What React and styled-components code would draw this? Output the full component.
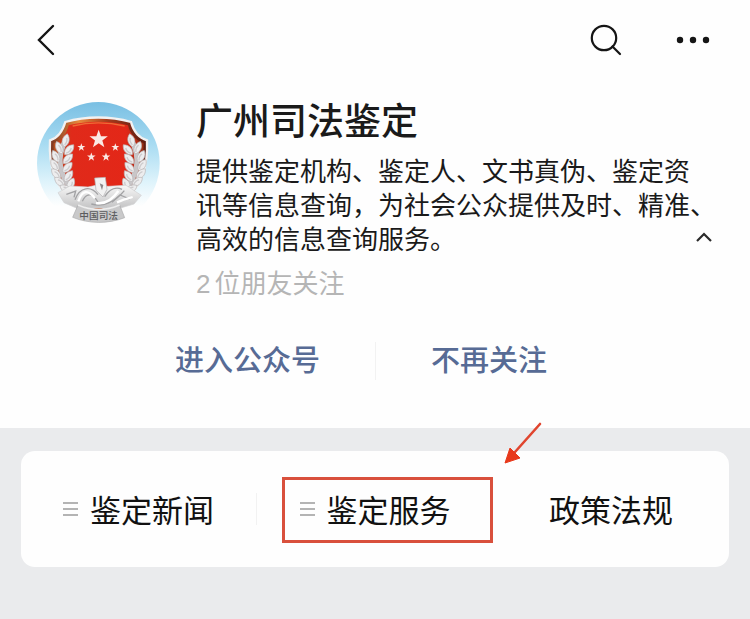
import { useState } from "react"
import styled, { createGlobalStyle } from "styled-components"

const menus = [
    { name: "鉴定新闻", hasSub: true },
    { name: "鉴定服务", hasSub: true, marked: true },
    { name: "政策法规", hasSub: false },
]

const STAR = "M0 -10 L2.4 -3.2 L9.5 -3.1 L3.8 1.2 L5.9 8.1 L0 4 L-5.9 8.1 L-3.8 1.2 L-9.5 -3.1 L-2.4 -3.2 Z"

// x, y, rotation of every leaf on the left branch, the right one is mirrored
const leaves = [
    [137, 152, 14], [118, 174, -24], [147, 180, 42],
    [108, 200, -28], [143, 207, 44], [105, 226, -34],
    [142, 233, 42], [109, 252, -42], [145, 259, 36],
    [120, 276, -50], [152, 283, 26], [138, 297, -60],
]

function Branch() {
    return <g>
        <path d="M137 150 C112 195 112 250 160 305" fill="none" stroke="#c9c6c8" strokeWidth="16" />
        {leaves.map(([x, y, r]) => (
            <g key={y} transform={`translate(${x} ${y}) rotate(${r})`}>
                <path d="M0 -21 C14 -9 13 10 0 19 C-13 10 -14 -9 0 -21 Z" fill="#ededee" stroke="#bab7b9" strokeWidth="2" />
                <path d="M1 -9 C5 -2 4 6 0 13" fill="none" stroke="#cdcbcd" strokeWidth="4" />
            </g>
        ))}
    </g>
}

function Emblem() {
    return <EmblemSvg viewBox="51 36 369 369" role="img" aria-label="中国司法">
        <defs>
            <linearGradient id="sky" x1="0" y1="0" x2="0" y2="1">
                <stop offset="0" stopColor="#79bfe3" />
                <stop offset="0.35" stopColor="#a9dcf2" />
                <stop offset="0.65" stopColor="#def3fb" />
                <stop offset="0.85" stopColor="#fefefe" />
            </linearGradient>
            <linearGradient id="shield" x1="0" y1="0" x2="1" y2="0">
                <stop offset="0" stopColor="#b5501f" />
                <stop offset="0.2" stopColor="#e02a1a" />
                <stop offset="0.8" stopColor="#e32718" />
                <stop offset="1" stopColor="#963015" />
            </linearGradient>
            <linearGradient id="rim" x1="0" y1="0" x2="1" y2="0">
                <stop offset="0" stopColor="#7a3420" />
                <stop offset="0.3" stopColor="#e8893c" />
                <stop offset="0.6" stopColor="#a53a1c" />
                <stop offset="1" stopColor="#5c1a10" />
            </linearGradient>
            <linearGradient id="silver" x1="0" y1="0" x2="0" y2="1">
                <stop offset="0" stopColor="#f8f8f8" />
                <stop offset="1" stopColor="#c4c4c5" />
            </linearGradient>
        </defs>
        <circle cx="235" cy="220" r="184" fill="url(#sky)" />
        <path d="M90 151 C117 143 129 120 136 96 C197 78 272 78 333 96 C340 122 354 143 381 151 C384 220 369 285 315 330 L235 365 L155 330 C102 285 86 220 90 151 Z" fill="url(#rim)" stroke="#f2f1f1" strokeWidth="7" />
        <path d="M101 160 C128 151 140 128 146 106 C201 92 269 92 324 106 C330 130 344 150 371 160 C370 220 357 275 310 310 L160 310 C113 275 101 220 101 160 Z" fill="url(#shield)" />
        <path d="M158 108 C206 96 264 96 314 108" fill="none" stroke="#ef6b35" strokeWidth="4" />
        <g fill="#fbe9e4">
            <path d={STAR} transform="translate(236 148) scale(2.9)" />
            <path d={STAR} transform="translate(184 172) scale(1.25)" />
            <path d={STAR} transform="translate(286 172) scale(1.25)" />
            <path d={STAR} transform="translate(214 201) scale(1.35)" />
            <path d={STAR} transform="translate(258 201) scale(1.35)" />
        </g>
        <Branch />
        <g transform="translate(471 0) scale(-1 1)"><Branch /></g>
        <path d="M114 308 L150 288 L204 291 L228 286 L265 289 L318 286 L364 316 L342 342 L302 354 L169 354 L132 338 Z" fill="url(#silver)" stroke="#d2d2d3" strokeWidth="2" />
        <path d="M224 264 L256 262 L261 298 L249 321 L228 301 Z" fill="#f2f2f2" stroke="#b1aeb0" strokeWidth="2" />
        <path d="M239 280 L250 285 L246 301 Z" fill="#8b8789" />
        <g fill="none" stroke="#a2a2a4" strokeWidth="4">
            <path d="M165 329 C180 289 213 287 234 314" />
            <path d="M187 334 C200 304 222 310 236 342" />
            <path d="M214 342 C249 353 285 336 313 302" />
            <path d="M254 320 C270 295 290 291 306 298" />
            <path d="M276 337 L300 315 L329 327" />
            <path d="M139 313 L167 303 L162 322" />
        </g>
        <g fill="none" stroke="#fff" strokeWidth="7">
            <path d="M175 334 C187 299 205 299 225 325" />
            <path d="M228 339 C258 344 280 325 295 303" />
            <path d="M291 337 L311 329 L338 321" />
        </g>
        <path d="M174 345 C215 363 257 363 299 345 L314 383 C265 402 207 402 158 382 Z" fill="#c9c9ca" stroke="#a9a9aa" strokeWidth="2" />
        <path d="M174 345 C215 363 257 363 299 345" fill="none" stroke="#eee" strokeWidth="5" />
        <EmblemText x="236" y="386" textAnchor="middle">中国司法</EmblemText>
    </EmblemSvg>
}

export default function App() {
    const [open, setOpen] = useState(true)

    return <Page>
        <GlobalStyle />
        <TopBar>
            <IconButton aria-label="返回">
                <svg width="20" height="32" viewBox="0 0 20 32">
                    <path d="M17 2 L3 16 L17 30" fill="none" stroke="#151515" strokeWidth="2.4" strokeLinecap="round" />
                </svg>
            </IconButton>
            <TopActions>
                <IconButton aria-label="搜索">
                    <svg width="32" height="32" viewBox="0 0 32 32" fill="none" stroke="#151515" strokeWidth="2.2">
                        <circle cx="14" cy="14" r="12.2" />
                        <path d="M22.5 22.5 L30 30" strokeLinecap="round" />
                    </svg>
                </IconButton>
                <IconButton aria-label="更多">
                    <svg width="34" height="32" viewBox="0 0 34 32" fill="#151515">
                        <circle cx="4" cy="16" r="3.2" />
                        <circle cx="17" cy="16" r="3.2" />
                        <circle cx="30" cy="16" r="3.2" />
                    </svg>
                </IconButton>
            </TopActions>
        </TopBar>

        <Profile>
            <Emblem />
            <Info>
                <Name>广州司法鉴定</Name>
                <Intro>
                    提供鉴定机构、鉴定人、文书真伪、鉴定资
                    {open && <>
                        <br />讯等信息查询，为社会公众提供及时、精准、
                        <br />高效的信息查询服务。
                    </>}
                </Intro>
                <Friends><Count>2</Count>位朋友关注</Friends>
            </Info>
            <Fold aria-label="收起" aria-expanded={open} onClick={() => setOpen(!open)}>
                <svg width="18" height="12" viewBox="0 0 18 12">
                    <path d="M2 10 L9 3 L16 10" fill="none" stroke="#2b2b2b" strokeWidth="2.2" />
                </svg>
            </Fold>
        </Profile>

        <Actions>
            <Action $side="flex-end">进入公众号</Action>
            <Action $side="flex-start">不再关注</Action>
        </Actions>

        <Bottom>
            <Menu>
                {menus.map((m) => (
                    <MenuItem key={m.name}>
                        <MenuButton>
                            {m.hasSub && <svg width="15" height="16" viewBox="0 0 15 16" aria-hidden="true">
                                <path d="M0 2 H15 M0 8 H15 M0 14 H15" stroke="#b4b4b4" strokeWidth="2" />
                            </svg>}
                            {m.name}
                        </MenuButton>
                        {m.marked && <>
                            <Mark />
                            <Arrow viewBox="0 0 40 44" aria-hidden="true">
                                <path d="M37 3 L12 31" stroke="#e0452f" strokeWidth="2.6" strokeLinecap="round" />
                                <path d="M2 42 L7 27 L17 37 Z" fill="#e8391c" stroke="#e8391c" strokeWidth="1" />
                            </Arrow>
                        </>}
                    </MenuItem>
                ))}
            </Menu>
        </Bottom>
    </Page>
}

const GlobalStyle = createGlobalStyle`
    body {
        margin: 0;
        background: #eaebed;
        font-family: "Liberation Sans", "Noto Sans CJK SC", sans-serif;
        color: #1a1a1a;
    }
    button {
        margin: 0;
        padding: 0;
        border: 0;
        background: none;
        color: inherit;
        font-family: inherit;
        cursor: pointer;
    }
    svg {
        display: block;
        flex-shrink: 0;
    }
`

const Page = styled.div`
    display: flex;
    flex-direction: column;
    min-height: 100vh;
    background: #fefefe;
`

const TopBar = styled.header`
    display: flex;
    justify-content: space-between;
    align-items: center;
    padding: 24px 40px 24px 36px;
`

const TopActions = styled.div`
    display: flex;
    gap: 54px;
`

const IconButton = styled.button`
    display: flex;
`

const Profile = styled.section`
    display: flex;
    align-items: flex-start;
    padding: 16px 37px 0 37px;
`

const EmblemSvg = styled.svg`
    width: 123px;
    height: 123px;
    margin-top: 6px;
`

const EmblemText = styled.text`
    font-size: 29px;
    font-family: "Noto Sans CJK SC", sans-serif;
    font-weight: 500;
    fill: #5c5c5e;
`

const Info = styled.div`
    flex: 1;
    min-width: 0;
    margin-left: 36px;
`

const Name = styled.h1`
    margin: 0;
    font-family: "Noto Sans CJK SC", sans-serif;
    font-size: 37px;
    line-height: 46px;
    font-weight: 500;
`

const Intro = styled.p`
    margin: 13px 0 0;
    font-size: 26px;
    line-height: 34px;
    white-space: nowrap;
`

const Friends = styled.p`
    display: flex;
    gap: 4px;
    margin: 9px 0 0;
    font-size: 26px;
    line-height: 36px;
    color: #b5b5b5;
`

const Count = styled.span`
    font-family: "Liberation Sans", sans-serif;
`

const Fold = styled.button`
    align-self: flex-end;
    padding: 8px 0;
    margin-bottom: 51px;
`

const Actions = styled.div`
    display: grid;
    grid-template-columns: 1fr 1fr;
    padding: 40px 0 48px;
`

const Action = styled.button`
    display: flex;
    justify-content: ${(p) => p.$side};
    padding: 0 55px;
    font-size: 29px;
    line-height: 38px;
    font-weight: 500;
    color: #576b95;
    & + & {
        border-left: 1px solid #f2f2f2;
    }
`

const Bottom = styled.footer`
    flex: 1;
    padding: 23px 21px 51px;
    background: #eaebed;
`

const Menu = styled.nav`
    display: grid;
    grid-template-columns: repeat(3, 1fr);
    padding: 42px 0;
    border-radius: 14px;
    background: #fefefe;
`

const MenuItem = styled.div`
    position: relative;
    &:first-child {
        border-right: 1px solid #f2f2f2;
    }
`

const MenuButton = styled.button`
    display: flex;
    justify-content: center;
    align-items: center;
    gap: 12px;
    width: 100%;
    font-family: "Noto Sans CJK SC", sans-serif;
    font-size: 31px;
    line-height: 32px;
    color: #111;
`

/* red frame drawn over the menu entry */
const Mark = styled.div`
    position: absolute;
    inset: -16px 0 -18px 25px;
    border: 3px solid #d9503c;
    pointer-events: none;
`

const Arrow = styled.svg`
    position: absolute;
    width: 40px;
    height: 44px;
    right: -50px;
    top: -72px;
    pointer-events: none;
`
